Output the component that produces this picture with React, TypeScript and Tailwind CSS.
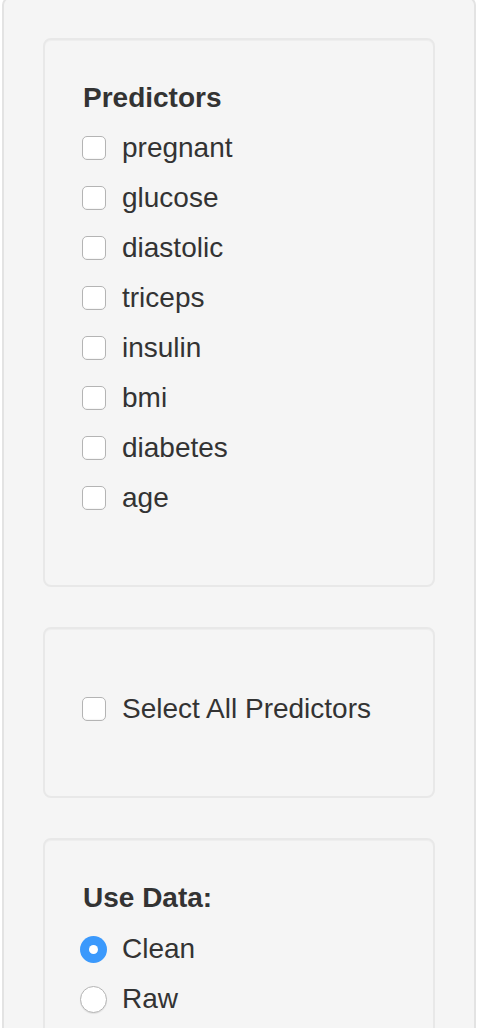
const PREDICTORS = ['pregnant', 'glucose', 'diastolic', 'triceps', 'insulin', 'bmi', 'diabetes', 'age'];

function Checkbox() {
  return (
    <span className="w-[24px] h-[24px] shrink-0 rounded-[5px] border border-[#b4b4b4] bg-white shadow-[inset_0_-1px_1px_rgba(0,0,0,0.04)]" />
  );
}

function Radio({ checked }: { checked?: boolean }) {
  if (checked) {
    return (
      <span className="w-[27px] h-[27px] shrink-0 rounded-full bg-[#3b99fc] flex items-center justify-center">
        <span className="w-[9px] h-[9px] rounded-full bg-white" />
      </span>
    );
  }
  return (
    <span className="w-[27px] h-[27px] shrink-0 rounded-full border border-[#b4b4b4] bg-white shadow-[0_1px_1px_rgba(0,0,0,0.08)]" />
  );
}

function Row({ label, children }: { label: string; children: React.ReactNode }) {
  return (
    <label className="h-[50px] flex items-center gap-[16px] pl-[37px] text-[28px] text-[#333]">
      {children}
      <span className="leading-none">{label}</span>
    </label>
  );
}

function Well({ children, className = '' }: { children: React.ReactNode; className?: string }) {
  return (
    <div className={`border-2 border-[#e8e8e8] rounded-[8px] bg-[#f5f5f5] shadow-[inset_0_1px_1px_rgba(0,0,0,0.03)] ${className}`}>
      {children}
    </div>
  );
}

export default function App() {
  return (
    <div className="min-h-[1028px] bg-white pl-[2px] pr-[10px] overflow-hidden" style={{ fontFamily: '"Liberation Sans", Arial, sans-serif' }}>
      <div className="-mt-[3px] border-2 border-[#e3e3e3] rounded-[8px] bg-[#f5f5f5] px-[39px] pt-[39px] pb-[60px] flex flex-col gap-[40px]">
        <Well className="pt-[38px] pb-[62px]">
          <h3 className="pl-[38px] text-[28px] leading-[40px] font-bold text-[#333] mb-[5px]">Predictors</h3>
          {PREDICTORS.map((p) => (
            <Row key={p} label={p}>
              <Checkbox />
            </Row>
          ))}
        </Well>

        <Well className="pt-[55px] pb-[62px]">
          <Row label="Select All Predictors">
            <Checkbox />
          </Row>
        </Well>

        <Well className="pt-[38px] pb-[62px]">
          <h3 className="pl-[38px] text-[28px] leading-[40px] font-bold text-[#333] mb-[6px]">Use Data:</h3>
          <Row label="Clean">
            <span className="-ml-[2px] mr-[-1px] flex">
              <Radio checked />
            </span>
          </Row>
          <Row label="Raw">
            <span className="-ml-[2px] mr-[-1px] flex">
              <Radio />
            </span>
          </Row>
        </Well>
      </div>
    </div>
  );
}
